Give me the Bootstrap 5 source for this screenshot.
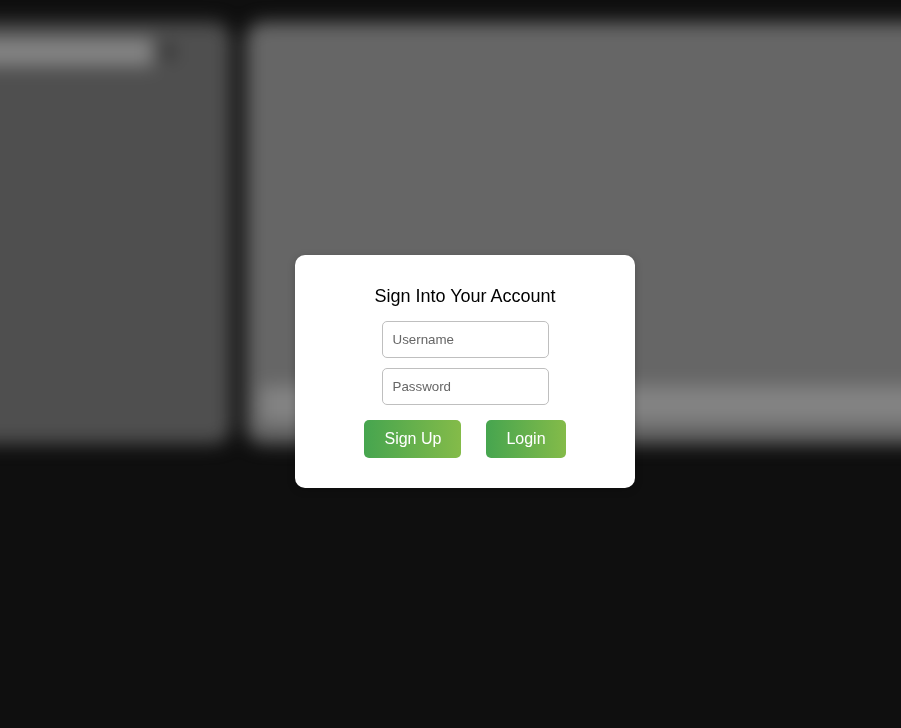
<!DOCTYPE html>
<html lang="en">
<head>
<meta charset="utf-8">
<meta name="viewport" content="width=device-width, initial-scale=1">
<title>Sign In</title>
<link rel="stylesheet" href="https://cdn.jsdelivr.net/npm/bootstrap@5.3.0/dist/css/bootstrap.min.css">
<style>
  body { background: #0f0f0f; color: #000; font-family: "Liberation Sans", Arial, sans-serif; }
  .workspace { margin: 0 -40px; padding-top: 22px; gap: 15px; filter: blur(9px); }
  .pane { height: 422px; }
  .side-pane { width: 271px; background: #4f4f4f; border-radius: 0 18px 18px 0; padding-top: 16px; gap: 9px; }
  .search-bar { width: 193px; height: 28px; background: #848484; }
  .search-dot { width: 11px; height: 11px; background: #222; margin-top: 8px; }
  .main-pane { background: #666; border-radius: 18px 0 0 18px; padding: 0 0 21px 14px; }
  .message-bar { height: 37px; background: #838383; border-radius: 6px 0 0 6px; }
  .login-overlay { padding: 15px 0 0 29px; }
  .login-card { width: 340px; height: 233px; border-radius: 10px; padding-top: 31px; box-shadow: 0 2px 8px rgba(0,0,0,.2); }
  .login-title { font-size: 18px; line-height: 21px; margin-bottom: 14px; }
  .login-card .form-control { width: 167px; height: 37px; padding: 0 10px; font-size: 13.333px; border: 1px solid #bfbfbf; border-radius: 5px; margin-bottom: 10px; }
  .login-card .form-control::placeholder { color: #666; }
  .login-actions { margin-top: 5px; gap: 25px; }
  .btn-leaf { height: 38px; padding: 0 20px; border: 0; border-radius: 5px; font-size: 16px; line-height: 38px; color: #fff; background: linear-gradient(to right, #46a54f, #84bb49); }
  .btn-leaf:hover { color: #fff; }
</style>
<script src="https://cdn.jsdelivr.net/npm/bootstrap@5.3.0/dist/js/bootstrap.bundle.min.js"></script>
</head>
<body class="vh-100 overflow-hidden">
  <div class="workspace d-flex" aria-hidden="true">
    <aside class="pane side-pane d-flex align-items-start flex-shrink-0">
      <div class="search-bar"></div>
      <div class="search-dot"></div>
    </aside>
    <main class="pane main-pane flex-grow-1 d-flex flex-column justify-content-end">
      <div class="message-bar"></div>
    </main>
  </div>
  <div class="login-overlay position-fixed top-0 start-0 w-100 h-100 d-flex justify-content-center align-items-center">
    <form class="login-card bg-white d-flex flex-column align-items-center">
      <h1 class="login-title fw-normal">Sign Into Your Account</h1>
      <input class="form-control" type="text" placeholder="Username" aria-label="Username">
      <input class="form-control" type="password" placeholder="Password" aria-label="Password">
      <div class="login-actions d-flex">
        <button class="btn btn-leaf" type="button">Sign Up</button>
        <button class="btn btn-leaf" type="button">Login</button>
      </div>
    </form>
  </div>
</body>
</html>
